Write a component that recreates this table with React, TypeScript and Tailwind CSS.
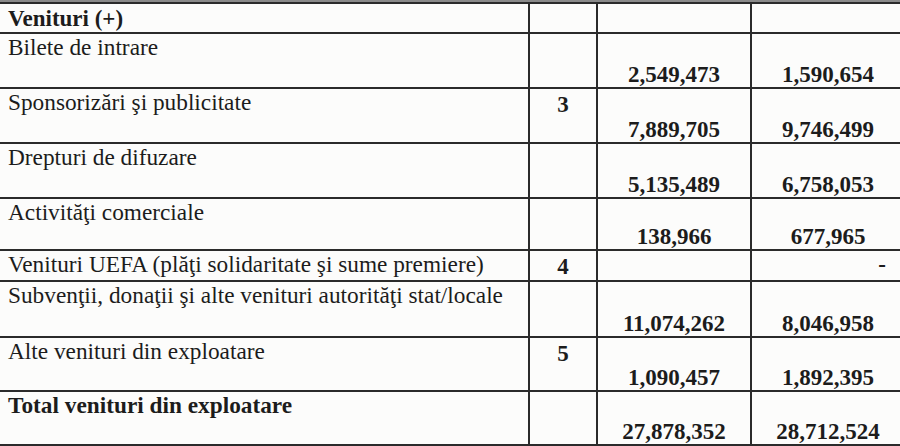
const rows = [
  { label: 'Bilete de intrare', note: '', a: '2,549,473', b: '1,590,654', h: 'h-[55px]' },
  { label: 'Sponsorizări şi publicitate', note: '3', a: '7,889,705', b: '9,746,499', h: 'h-[55px]' },
  { label: 'Drepturi de difuzare', note: '', a: '5,135,489', b: '6,758,053', h: 'h-[55px]' },
  { label: 'Activităţi comerciale', note: '', a: '138,966', b: '677,965', h: 'h-[52px]' },
  { label: 'Venituri UEFA (plăţi solidaritate şi sume premiere)', note: '4', a: '', b: '-', h: 'h-[31px]' },
  { label: 'Subvenţii, donaţii şi alte venituri autorităţi stat/locale', note: '', a: '11,074,262', b: '8,046,958', h: 'h-[56px]' },
  { label: 'Alte venituri din exploatare', note: '5', a: '1,090,457', b: '1,892,395', h: 'h-[54px]' },
];

const cell = 'border-b-2 border-r-2 border-[#2b2b2b]';

function Row({ label, note, a, b, h, bold }: { label: string; note: string; a: string; b: string; h: string; bold?: boolean }) {
  return (
    <div className={`grid grid-cols-[530px_68px_154px_152px] ${h}`}>
      <div className={`${cell} pl-2 pt-[2px] text-[23.3px] ${bold ? 'font-bold' : ''}`}>{label}</div>
      <div className={`${cell} text-center font-bold pt-[4px]`}>{note}</div>
      <div className={`${cell} flex items-end justify-center font-bold pb-[1px]`}>{a}</div>
      <div className={`border-b-2 border-[#2b2b2b] flex items-end font-bold pb-[1px] ${b === '-' ? 'justify-end pr-[18px] pb-[4px]' : 'justify-center'}`}>
        {b}
      </div>
    </div>
  );
}

export default function App() {
  return (
    <div className="w-[900px] h-[446px] overflow-hidden bg-[#fcfcfb] text-[#1c1c1c]">
      <div className="h-[2px] bg-[#8a8a8a]" />
      <div
        className="w-[904px] border-t-2 border-[#2b2b2b] text-[23px] leading-[23px]"
        style={{ fontFamily: '"Liberation Serif", "Times New Roman", serif' }}
      >
        <div className="grid grid-cols-[530px_68px_154px_152px] h-[30px]">
          <div className={`${cell} pl-2 pt-[3px] font-bold`}>Venituri (+)</div>
          <div className={cell} />
          <div className={cell} />
          <div className="border-b-2 border-[#2b2b2b]" />
        </div>
        {rows.map((r) => (
          <Row key={r.label} {...r} />
        ))}
        <Row label="Total venituri din exploatare" note="" a="27,878,352" b="28,712,524" h="h-[54px]" bold />
      </div>
    </div>
  );
}
